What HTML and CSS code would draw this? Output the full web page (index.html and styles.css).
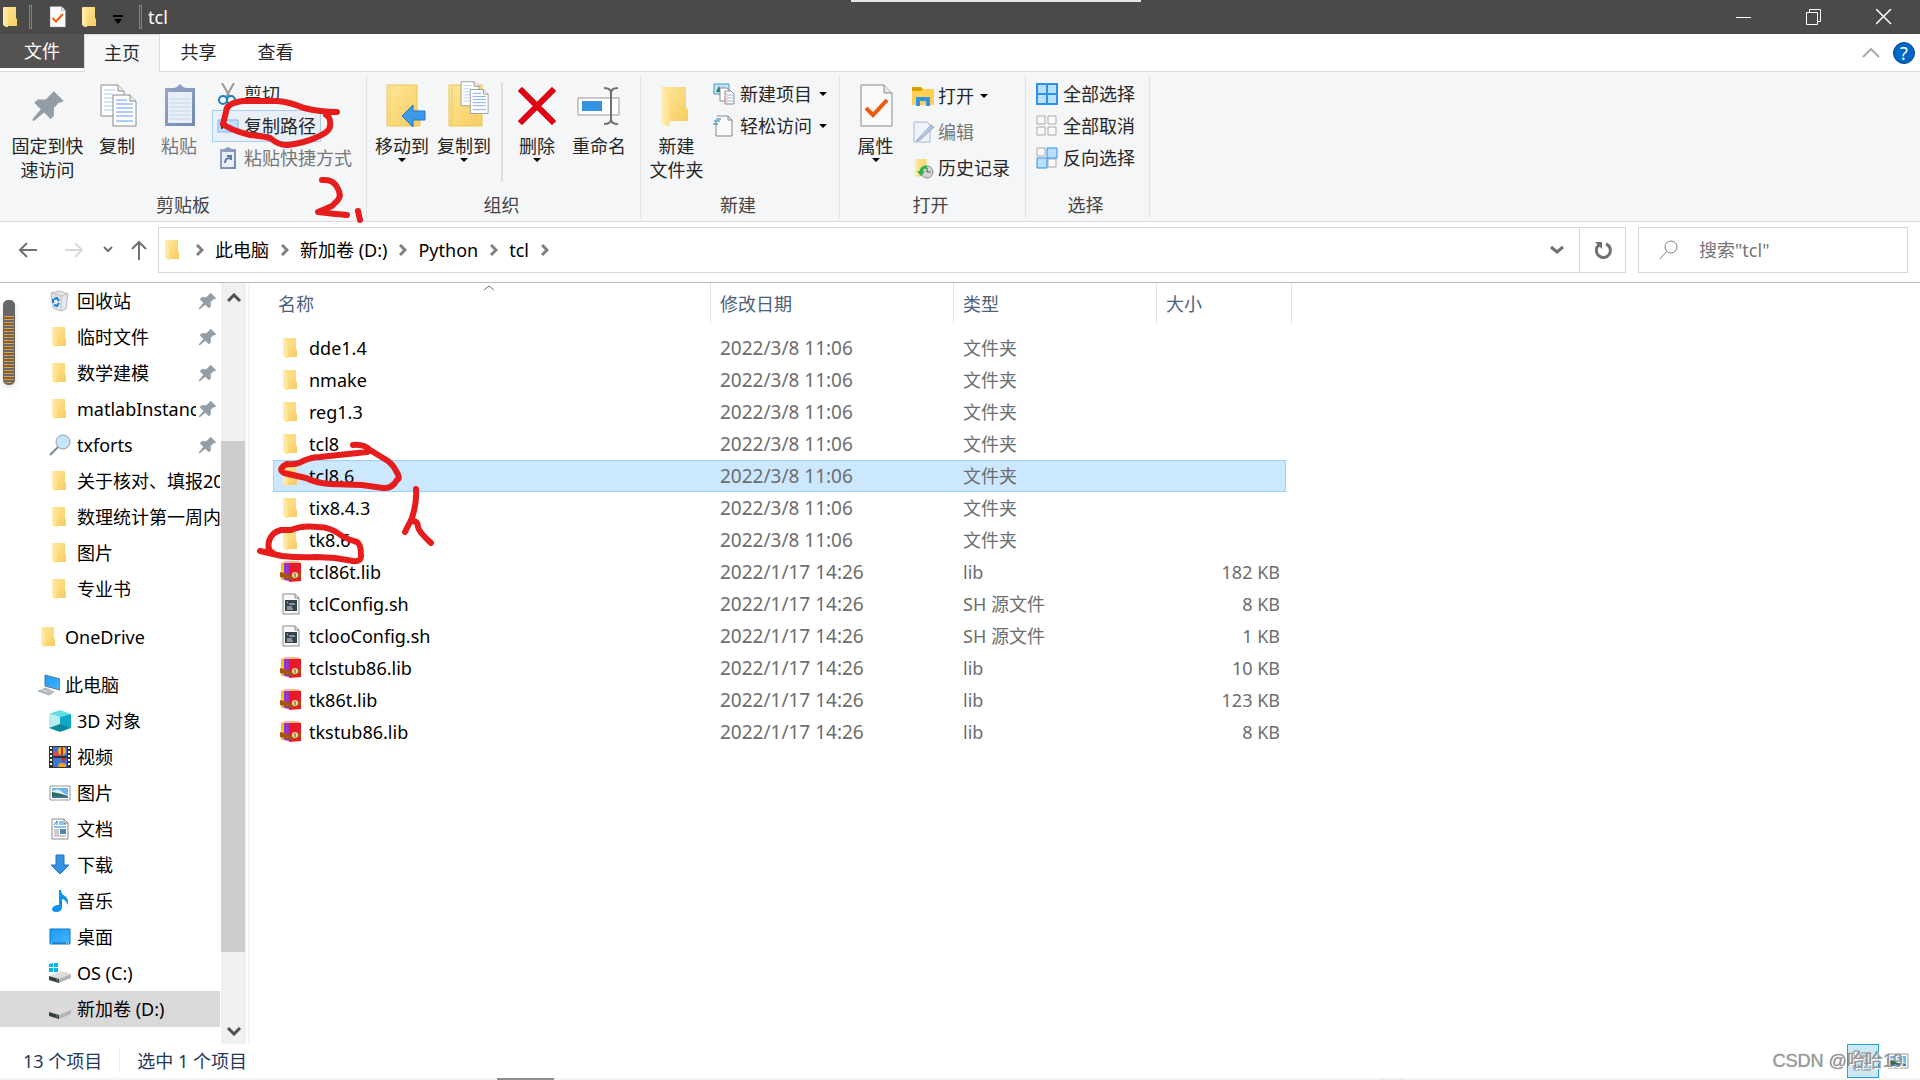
FILE: index.html
```html
<!DOCTYPE html>
<html lang="zh-CN">
<head>
<meta charset="utf-8">
<title>tcl</title>
<link rel="stylesheet" href="styles.css">
</head>
<body>
<svg class="defs" aria-hidden="true">
  <defs>
    <linearGradient id="gold" x1="0" x2="1" y1="0" y2="1"><stop offset="0" stop-color="#ffe699"/><stop offset="1" stop-color="#f6cd60"/></linearGradient>
    <linearGradient id="flap" x1="0" x2="1"><stop offset="0" stop-color="#ffeeb5"/><stop offset="1" stop-color="#ffe08a"/></linearGradient>
    <linearGradient id="sky" x1="0" x2="1" y1="0" y2="1"><stop offset="0" stop-color="#1a9bff"/><stop offset="1" stop-color="#46b4ff"/></linearGradient>
    <linearGradient id="clip" x1="0" x2="1" y1="0" y2="1"><stop offset="0" stop-color="#98a8c8"/><stop offset="1" stop-color="#7488b0"/></linearGradient>
    <symbol id="folder" viewBox="0 0 22 22"><path d="M4 1h12v11l1 1v7H4z" fill="url(#gold)"/><path d="M3 1l5 3v17l-2 0-3-2z" fill="url(#flap)"/></symbol>
    <symbol id="pin" viewBox="0 0 22 22"><path d="M14 2l6 6-2 1-1 0-3 3v5l-2 2-4-4-6 5-1-0 0-1 5-6-4-4 2-2h5l3-3z" fill="#929da5"/></symbol>
    <symbol id="pages" viewBox="0 0 38 44"><path d="M1 1h17l6 6v25H1z" fill="#fff" stroke="#8a8a8a"/><path d="M18 1v6h6" fill="#eee" stroke="#8a8a8a"/><path d="M4 6h11M4 10h9M4 14h9M4 18h9M4 22h9M4 26h9" stroke="#a9c6ff"/><path d="M13 11h17l6 6v25H13z" fill="#fff" stroke="#8a8a8a"/><path d="M30 11v6h6" fill="#eee" stroke="#8a8a8a"/><path d="M16 16h11M16 20h17M16 24h17M16 28h17M16 32h17M16 37h17" stroke="#5e98f8"/></symbol>
    <symbol id="bin" viewBox="0 0 22 22"><path d="M2 3l9-2 8 3-2 15-5 2-8-3z" fill="#e3e7ea" stroke="#b5babd"/><path d="M2 3l10 3 7-2M12 6v15" stroke="#bcc2c6" fill="none"/><path d="M5 9l3-1 2 3M10 13l-2 3-3-1M4 13V9" fill="none" stroke="#167fd5" stroke-width="2"/></symbol>
    <symbol id="lens" viewBox="0 0 22 22"><path d="M1 21l8-8" stroke="#7b858d" stroke-width="2"/><circle cx="14" cy="8" r="7" fill="#c4e6fc" stroke="#8e9da9"/></symbol>
    <symbol id="pc" viewBox="0 0 22 22"><path d="M7 1l15 4v11L7 12z" fill="url(#sky)" stroke="#59768a"/><path d="M0 17l8-3 8 4-5 3z" fill="#d4d9dd" stroke="#a8b0b5"/><path d="M3 17l9 3M6 15l8 4" stroke="#9aa3aa"/></symbol>
    <symbol id="cube" viewBox="0 0 22 22"><path d="M0 4l11-4 11 4-11 3z" fill="#67dbe4"/><path d="M0 4l11 3v9L0 18z" fill="#b8eef0"/><path d="M22 4L11 7v9l11 2z" fill="#0ca9c9"/><path d="M0 18l11-4 11 4-11 4z" fill="#0b8a9d"/></symbol>
    <symbol id="video" viewBox="0 0 22 22"><path d="M0 0h22v22H0z" fill="#333"/><path d="M4 1h14v9H4zM4 12h14v9H4z" fill="#3f74d9"/><path d="M1 2h2M1 6h2M1 10h2M1 14h2M1 18h2M19 2h2M19 6h2M19 10h2M19 14h2M19 18h2" stroke="#fff" stroke-width="2"/><path d="M4 7l4-2 5 5H4z" fill="#d64a5b"/><circle cx="13" cy="5" r="4" fill="#f2b21c"/><path d="M13 1v8" stroke="#c43019" stroke-width="2"/><path d="M12 12h5l-2 4h-1z" fill="#cc2b25"/><path d="M9 21q0-4 4-4t4 4z" fill="#f5a61b"/></symbol>
    <symbol id="photo" viewBox="0 0 22 22"><path d="M1 4h20v14H1z" fill="#fff" stroke="#999"/><path d="M3 6h16v10H3z" fill="#6cb6ed"/><path d="M3 9q6-3 9 0t7 4v3H3z" fill="#d8edf6"/><path d="M3 10q7 1 16 4H3z" fill="#2e6a58"/><path d="M3 14h16v2H3z" fill="#3874a3"/></symbol>
    <symbol id="doc" viewBox="0 0 22 22"><path d="M3 1h12l4 4v16H3z" fill="#fff" stroke="#888"/><path d="M15 1v4h4" fill="none" stroke="#888"/><path d="M5 7l3-4v4M10 4h4M10 6h7M5 9h12" fill="none" stroke="#1589d6"/><path d="M5 12h5M5 14h5M5 16h5M5 18h12" stroke="#999"/><path d="M11 11h6v5h-6z" fill="#4d86ac"/></symbol>
    <symbol id="down" viewBox="0 0 22 22"><path d="M7 1h8v10h5l-9 9-9-9h5z" fill="#3492e4" stroke="#1f72bd"/></symbol>
    <symbol id="note" viewBox="0 0 22 22"><path d="M10 0h2q0 4 4 6 5 4 2 9 0-5-5-6v8q0 5-6 5-4 0-4-3 1-4 7-4z" fill="#0a92ee"/></symbol>
    <symbol id="desk" viewBox="0 0 22 22"><path d="M1 3h20v15H1z" fill="url(#sky)" stroke="#0877bd"/><path d="M2 17h18" stroke="#0877bd"/><path d="M2 17h1M17 17h1M19 17h1" stroke="#fff"/></symbol>
    <symbol id="disk" viewBox="0 0 22 22"><path d="M0 14l12-5 10 3-12 5z" fill="#dcdcde"/><path d="M10 17l12-5v4l-12 5z" fill="#b4b4b7"/><path d="M0 14l10 3v4L0 18z" fill="#3a3d3a"/><path d="M7 17l2 1v1l-2-1z" fill="#30d040"/></symbol>
    <symbol id="osdisk" viewBox="0 0 22 22"><use href="#disk"/><path d="M0 2l4-1v4H0zM5 1h4v4H5zM0 6h4v4H0zM5 6h4v4H5z" fill="#00b7f1"/></symbol>
    <symbol id="rar" viewBox="0 0 22 22"><path d="M1 2l3-1v18H1z" fill="#f5c214"/><path d="M4 1h5v19l-5-1z" fill="#9435cc"/><path d="M9 2h12v18l-12 1z" fill="#e51b2b"/><path d="M2 2l3-2h13l3 2z" fill="#f6b98a"/><path d="M0 11l11 3 10-2v4l-10 3-11-3z" fill="#a8560f"/><circle cx="15" cy="14" r="3" fill="#ead9a6"/><path d="M15 12v4" stroke="#685015"/></symbol>
    <symbol id="sh" viewBox="0 0 22 22"><path d="M3 1h12l4 4v16H3z" fill="#fafafa" stroke="#888"/><path d="M15 1v4h4" fill="none" stroke="#888"/><path d="M5 7h12v11H5z" fill="#33454e"/><path d="M7 9l1 1M9 11h6M7 14h5M7 16h6" stroke="#dfe5e8"/></symbol>
    <symbol id="check" viewBox="0 0 34 44"><path d="M1 1h23l8 8v33H1z" fill="#fafafa" stroke="#8a8a8a"/><path d="M24 1v8h8" fill="#e6e6e6" stroke="#8a8a8a"/><path d="M6 24l7 7 14-15" fill="none" stroke="#f25a0c" stroke-width="4"/></symbol>
    <symbol id="caret" viewBox="0 0 8 5"><path d="M0 0h8L4 4z" fill="#000"/></symbol>
    <symbol id="chev" viewBox="0 0 8 12"><path d="M1 1l5 5-5 5" fill="none" stroke="#808080" stroke-width="3"/></symbol>
    <symbol id="vee" viewBox="0 0 14 10"><path d="M1 2l6 5 6-5" fill="none" stroke="#707070" stroke-width="3"/></symbol>
  </defs>
</svg>

<header class="titlebar">
  <svg class="i22 app"><use href="#folder"/></svg>
  <span class="bar"></span>
  <button class="quick" aria-label="属性"><svg class="i22" viewBox="0 0 34 44"><use href="#check"/></svg></button>
  <button class="quick" aria-label="新建文件夹"><svg class="i22"><use href="#folder"/></svg></button>
  <button class="quick narrow" aria-label="自定义"><svg width="10" height="10"><path d="M0 1h10" stroke="#000" stroke-width="2"/><path d="M1 4h8L5 9z"/></svg></button>
  <span class="bar"></span>
  <h1>tcl</h1>
  <div class="wins">
    <button aria-label="最小化"><svg width="16" height="16"><path d="M0 8.500h15" stroke="#fff"/></svg></button>
    <button aria-label="还原"><svg width="16" height="16"><path d="M.5 3.500h11v12H.5zM3.500 3V.5h11v12H12" fill="none" stroke="#fff"/></svg></button>
    <button aria-label="关闭"><svg width="16" height="16"><path d="M0 0l15 15M15 0L0 15" stroke="#fff" stroke-width="1.500"/></svg></button>
  </div>
  <span class="grip"></span>
</header>

<nav class="tabs">
  <button class="tab file">文件</button>
  <button class="tab active">主页</button>
  <button class="tab">共享</button>
  <button class="tab">查看</button>
  <div class="tabend">
    <button aria-label="折叠"><svg width="18" height="12"><path d="M1 10l8-8 8 8" fill="none" stroke="#aaa" stroke-width="2"/></svg></button>
    <button class="help" aria-label="帮助">?</button>
  </div>
</nav>

<section class="ribbon">
  <div class="group g1">
    <div class="tools">
      <button class="big wide"><svg viewBox="0 0 44 44"><use href="#pin" x="5" y="4" width="36" height="36"/></svg><span>固定到快<br>速访问</span></button>
      <button class="big"><svg viewBox="0 0 44 44"><use href="#pages" x="5" y="0" width="38" height="44"/></svg><span>复制</span></button>
      <button class="big off"><svg viewBox="0 0 44 44"><path d="M8 4h30v38H8z" fill="url(#clip)"/><path d="M11 8h24v31H11z" fill="#e9effa"/><path d="M12 15h22M12 19h22M12 23h22M12 27h22M12 31h22M12 35h22" stroke="#c8d3e8"/><path d="M14 8V5l6-2 3-3 3 3 6 2v3z" fill="#8c9cc0"/></svg><span>粘贴</span></button>
      <div class="stack">
        <button class="small"><svg class="i22" viewBox="0 0 22 22"><path d="M5 0l8 14M17 0L9 14" stroke="#999" stroke-width="2"/><circle cx="6" cy="17" r="4" fill="none" stroke="#1680c4" stroke-width="2"/><circle cx="14" cy="17" r="4" fill="none" stroke="#1680c4" stroke-width="2"/></svg>剪切</button>
        <button class="small hot"><svg class="i22" viewBox="0 0 22 22"><path d="M1 5h20v12H1z" fill="#bfe2ff" stroke="#7eb7e8"/><path d="M3 8l2 6 2-6 2 6" fill="none" stroke="#222"/></svg>复制路径</button>
        <button class="small off"><svg class="i22" viewBox="0 0 22 22"><path d="M3 2h16v20H3z" fill="url(#clip)"/><path d="M5 5h12v15H5z" fill="#e9effa"/><path d="M7 4V2l4-2 4 2v2z" fill="#8c9cc0"/><path d="M8 16q0-5 5-5M10 9h4v4" fill="none" stroke="#647aa5" stroke-width="2"/></svg>粘贴快捷方式</button>
      </div>
    </div>
    <div class="caption">剪贴板</div>
  </div>
  <div class="group g2">
    <div class="tools">
      <button class="big"><svg viewBox="-5 0 44 44"><path d="M2 1h30v24l3 4v13H2z" fill="url(#gold)" stroke="#eec650"/><path d="M5 2v39" stroke="#f5d372"/><path d="M17 32l11-11v6h12v9H28v7z" fill="#3c9ae8" stroke="#2379c5"/></svg><span>移动到</span><svg class="caret"><use href="#caret"/></svg></button>
      <button class="big"><svg viewBox="-5 0 44 44"><path d="M2 1h33v41H2z" fill="url(#gold)" stroke="#eec650"/><path d="M5 2v39M28 30v12" stroke="#efc960"/><use href="#pages" x="13" y="-3" width="30" height="34"/></svg><span>复制到</span><svg class="caret"><use href="#caret"/></svg></button>
      <i class="rule"></i>
      <button class="big"><svg viewBox="0 0 44 44"><path d="M5 5l34 34M39 5L5 39" stroke="#a90610" stroke-width="6"/><path d="M5 5l34 34M39 5L5 39" stroke="#e60012" stroke-width="5"/></svg><span>删除</span><svg class="caret"><use href="#caret"/></svg></button>
      <button class="big"><svg viewBox="0 0 44 44"><path d="M1 14h41v17H1z" fill="#fff" stroke="#999"/><path d="M5 17h20v10H5z" fill="#3492e4"/><path d="M27 4q7 0 7 5v26q0 5-7 5M41 4q-7 0-7 5v26q0 5 7 5" fill="none" stroke="#707070" stroke-width="2"/></svg><span>重命名</span></button>
    </div>
    <div class="caption">组织</div>
  </div>
  <div class="group g3">
    <div class="tools">
      <button class="big"><svg viewBox="0 0 44 44"><path d="M7 3h24v20l2 3v11H7z" fill="url(#gold)"/><path d="M6 3l9 7v30l-2 3-7-4z" fill="url(#flap)"/></svg><span>新建<br>文件夹</span></button>
      <div class="stack">
        <button class="small"><svg class="i22" viewBox="0 0 22 22"><path d="M1 1h15v10H1z" fill="#bfe6fa" stroke="#5795bd"/><path d="M3 9l3-6 3 6z" fill="#36735e"/><path d="M7 5h7l3 3v10H7z" fill="#fff" stroke="#888"/><path d="M12 8h6l3 3v10h-9z" fill="#fff" stroke="#888"/><path d="M15 12h5M15 15h5M15 18h5" stroke="#8fb5ee"/><path d="M14 10v10" stroke="#f2a2a2"/></svg>新建项目<svg class="caret"><use href="#caret"/></svg></button>
        <button class="small"><svg class="i22" viewBox="0 0 22 22"><path d="M4 1h11l4 4v16H3V6" fill="#fafafa" stroke="#888"/><path d="M15 1v4h4" fill="none" stroke="#888"/><path d="M3 4h5M1 6h6M0 9h5" stroke="#1777b7" stroke-width="1"/></svg>轻松访问<svg class="caret"><use href="#caret"/></svg></button>
      </div>
    </div>
    <div class="caption">新建</div>
  </div>
  <div class="group g4">
    <div class="tools">
      <button class="big"><svg viewBox="0 0 44 44"><use href="#check" x="6" y="0" width="34" height="44"/></svg><span>属性</span><svg class="caret"><use href="#caret"/></svg></button>
      <div class="stack loose">
        <button class="small"><svg class="i22" viewBox="0 0 22 22"><path d="M0 4V2h9l2 2h11v16H0z" fill="#ffd053"/><path d="M0 2h9l2 2-2 2H0z" fill="#dba000"/><path d="M4 21v-9h14v9h-4v-5H8v5z" fill="#3492e4"/></svg>打开<svg class="caret"><use href="#caret"/></svg></button>
        <button class="small off"><svg class="i22" viewBox="0 0 22 22"><path d="M2 1h13l3 3v17H2z" fill="#eef3fb" stroke="#a9b8d5"/><path d="M5 19L19 4l3 2L8 19l-4 1z" fill="#b9c7e1" stroke="#93a5ca"/></svg>编辑</button>
        <button class="small"><svg class="i22" viewBox="0 0 22 22"><use href="#folder" width="20" height="22"/><circle cx="15" cy="15" r="6" fill="#d4d4d4" stroke="#888"/><path d="M15 11v4h4" fill="none" stroke="#555"/><path d="M15 10q-6 0-6 5" fill="none" stroke="#2bb24c" stroke-width="3"/><path d="M5 14h8l-4 5z" fill="#2bb24c"/></svg>历史记录</button>
      </div>
    </div>
    <div class="caption">打开</div>
  </div>
  <div class="group g5">
    <div class="tools">
      <div class="stack">
        <button class="small"><svg class="i22" viewBox="0 0 22 22"><path d="M1 1h20v20H1z" fill="#b9e0ff" stroke="#2c93e8" stroke-width="2"/><path d="M11 0v22M0 11h22" stroke="#2c93e8" stroke-width="2"/></svg>全部选择</button>
        <button class="small"><svg class="i22" viewBox="0 0 22 22"><path d="M1 1h8v8H1zM12 1h8v8h-8zM1 12h8v8H1zM12 12h8v8h-8z" fill="#fafafa" stroke="#aaa"/></svg>全部取消</button>
        <button class="small"><svg class="i22" viewBox="0 0 22 22"><path d="M1 1h8v8H1zM12 12h8v8h-8z" fill="#fafafa" stroke="#aaa"/><path d="M11 1h10v10H11zM1 11h10v10H1z" fill="#b9e0ff" stroke="#2c93e8"/></svg>反向选择</button>
      </div>
    </div>
    <div class="caption">选择</div>
  </div>
</section>

<section class="navbar">
  <div class="arrows">
    <button aria-label="后退"><svg width="20" height="18"><path d="M19 9H2M9 2L2 9l7 7" fill="none" stroke="#707070" stroke-width="2"/></svg></button>
    <button aria-label="前进"><svg width="20" height="18"><path d="M1 9h17M11 2l7 7-7 7" fill="none" stroke="#d8d8d8" stroke-width="2"/></svg></button>
    <button class="slim" aria-label="最近"><svg width="10" height="8"><path d="M1 1l4 4 4-4" fill="none" stroke="#707070" stroke-width="2"/></svg></button>
    <button class="slim" aria-label="上移"><svg width="16" height="20"><path d="M8 20V2M1 9l7-7 7 7" fill="none" stroke="#707070" stroke-width="2"/></svg></button>
  </div>
  <div class="address">
    <svg class="i22"><use href="#folder"/></svg>
    <svg class="chev"><use href="#chev"/></svg><a href="#">此电脑</a>
    <svg class="chev"><use href="#chev"/></svg><a href="#">新加卷 (D:)</a>
    <svg class="chev"><use href="#chev"/></svg><a href="#">Python</a>
    <svg class="chev"><use href="#chev"/></svg><a href="#">tcl</a>
    <svg class="chev"><use href="#chev"/></svg>
    <button class="drop" aria-label="历史"><svg width="14" height="10"><use href="#vee"/></svg></button>
    <button class="reload" aria-label="刷新"><svg width="18" height="18"><path d="M12 3a7 7 0 1 1-7 1" fill="none" stroke="#707070" stroke-width="3"/><path d="M1 1h7v7z" fill="#707070"/></svg></button>
  </div>
  <label class="search">
    <svg width="20" height="20"><circle cx="12" cy="7" r="6" fill="none" stroke="#808080"/><path d="M8 11l-7 8" stroke="#808080" stroke-width="1"/></svg>
    <input type="text" aria-label="搜索" placeholder="搜索&quot;tcl&quot;">
  </label>
</section>

<main class="body">
  <aside class="side">
    <div class="tree">
      <a href="#"><svg class="i22"><use href="#bin"/></svg><span>回收站</span><svg class="pinned"><use href="#pin"/></svg></a>
      <a href="#"><svg class="i22"><use href="#folder"/></svg><span>临时文件</span><svg class="pinned"><use href="#pin"/></svg></a>
      <a href="#"><svg class="i22"><use href="#folder"/></svg><span>数学建模</span><svg class="pinned"><use href="#pin"/></svg></a>
      <a href="#"><svg class="i22"><use href="#folder"/></svg><span>matlabInstanc</span><svg class="pinned"><use href="#pin"/></svg></a>
      <a href="#"><svg class="i22"><use href="#lens"/></svg><span>txforts</span><svg class="pinned"><use href="#pin"/></svg></a>
      <a href="#"><svg class="i22"><use href="#folder"/></svg><span>关于核对、填报20</span></a>
      <a href="#"><svg class="i22"><use href="#folder"/></svg><span>数理统计第一周内</span></a>
      <a href="#"><svg class="i22"><use href="#folder"/></svg><span>图片</span></a>
      <a href="#"><svg class="i22"><use href="#folder"/></svg><span>专业书</span></a>
      <a href="#" class="root"><svg class="i22"><use href="#folder"/></svg><span>OneDrive</span></a>
      <a href="#" class="root"><svg class="i22"><use href="#pc"/></svg><span>此电脑</span></a>
      <a href="#"><svg class="i22"><use href="#cube"/></svg><span>3D 对象</span></a>
      <a href="#"><svg class="i22"><use href="#video"/></svg><span>视频</span></a>
      <a href="#"><svg class="i22"><use href="#photo"/></svg><span>图片</span></a>
      <a href="#"><svg class="i22"><use href="#doc"/></svg><span>文档</span></a>
      <a href="#"><svg class="i22"><use href="#down"/></svg><span>下载</span></a>
      <a href="#"><svg class="i22"><use href="#note"/></svg><span>音乐</span></a>
      <a href="#"><svg class="i22"><use href="#desk"/></svg><span>桌面</span></a>
      <a href="#"><svg class="i22"><use href="#osdisk"/></svg><span>OS (C:)</span></a>
      <a href="#" class="current"><svg class="i22"><use href="#disk"/></svg><span>新加卷 (D:)</span></a>
    </div>
    <div class="scroll">
      <button aria-label="向上"><svg width="14" height="10"><path d="M1 8l6-6 6 6" fill="none" stroke="#505050" stroke-width="3"/></svg></button>
      <div class="track"><div class="thumb"></div></div>
      <button aria-label="向下"><svg width="14" height="10"><path d="M1 2l6 6 6-6" fill="none" stroke="#505050" stroke-width="3"/></svg></button>
    </div>
  </aside>
  <section class="files">
    <table>
      <colgroup><col class="c1"><col class="c2"><col class="c3"><col class="c4"></colgroup>
      <thead><tr><th class="sorted">名称<svg width="12" height="7"><path d="M1 6l5-4 5 4" fill="none" stroke="#707070"/></svg></th><th>修改日期</th><th>类型</th><th>大小</th></tr></thead>
      <tbody>
        <tr><td><div><svg class="i22"><use href="#folder"/></svg>dde1.4</div></td><td>2022/3/8 11:06</td><td>文件夹</td><td></td></tr>
        <tr><td><div><svg class="i22"><use href="#folder"/></svg>nmake</div></td><td>2022/3/8 11:06</td><td>文件夹</td><td></td></tr>
        <tr><td><div><svg class="i22"><use href="#folder"/></svg>reg1.3</div></td><td>2022/3/8 11:06</td><td>文件夹</td><td></td></tr>
        <tr><td><div><svg class="i22"><use href="#folder"/></svg>tcl8</div></td><td>2022/3/8 11:06</td><td>文件夹</td><td></td></tr>
        <tr class="selected"><td><div><svg class="i22"><use href="#folder"/></svg>tcl8.6</div></td><td>2022/3/8 11:06</td><td>文件夹</td><td></td></tr>
        <tr><td><div><svg class="i22"><use href="#folder"/></svg>tix8.4.3</div></td><td>2022/3/8 11:06</td><td>文件夹</td><td></td></tr>
        <tr><td><div><svg class="i22"><use href="#folder"/></svg>tk8.6</div></td><td>2022/3/8 11:06</td><td>文件夹</td><td></td></tr>
        <tr><td><div><svg class="i22"><use href="#rar"/></svg>tcl86t.lib</div></td><td>2022/1/17 14:26</td><td>lib</td><td>182 KB</td></tr>
        <tr><td><div><svg class="i22"><use href="#sh"/></svg>tclConfig.sh</div></td><td>2022/1/17 14:26</td><td>SH 源文件</td><td>8 KB</td></tr>
        <tr><td><div><svg class="i22"><use href="#sh"/></svg>tclooConfig.sh</div></td><td>2022/1/17 14:26</td><td>SH 源文件</td><td>1 KB</td></tr>
        <tr><td><div><svg class="i22"><use href="#rar"/></svg>tclstub86.lib</div></td><td>2022/1/17 14:26</td><td>lib</td><td>10 KB</td></tr>
        <tr><td><div><svg class="i22"><use href="#rar"/></svg>tk86t.lib</div></td><td>2022/1/17 14:26</td><td>lib</td><td>123 KB</td></tr>
        <tr><td><div><svg class="i22"><use href="#rar"/></svg>tkstub86.lib</div></td><td>2022/1/17 14:26</td><td>lib</td><td>8 KB</td></tr>
      </tbody>
    </table>
  </section>
</main>

<footer class="status">
  <span class="count">13 个项目</span>
  <span class="picked">选中 1 个项目</span>
  <div class="views">
    <button class="on" aria-label="详细信息"><svg class="i22" viewBox="0 0 22 22"><path d="M2 1h5v5H2zM2 8h5v5H2zM2 15h5v5H2z" fill="#fff" stroke="#888"/><path d="M9 3h10M9 6h10M9 10h10M9 13h10M9 17h10M9 20h10" stroke="#888"/></svg></button>
    <button aria-label="大图标"><svg class="i22"><use href="#photo"/></svg></button>
  </div>
  <span class="mark">CSDN @哈哈19</span>
</footer>
<div class="meter"></div>
<div class="shade left"></div>
<div class="shade right"></div>

<svg class="ink" width="480" height="600" aria-hidden="true">
  <path d="M337 112Q320 112 304 108Q290 102 277 101L243 101Q226 103 226 112L223 124Q230 130 250 135Q262 136 270 138Q280 146 288 145Q304 143 315 138Q330 132 330 126Q331 117 326 115"/>
  <path d="M322 180Q333 179 337 187Q342 195 338 200L332 206L318 212Q334 214 347 215M358 211L360 220"/>
  <path d="M353 445Q364 444 370 450L388 461Q394 466 396 471Q401 478 397 480Q392 489 383 488L362 485L330 484Q316 483 306 478L284 473Q277 469 287 464Q297 465 303 461Q312 457 320 457L367 452"/>
  <path d="M416 489Q417 502 412 518L405 532M412 521Q418 521 418 527Q419 532 431 543"/>
  <path d="M260 551L282 556Q300 558 317 557L335 558L353 561Q361 562 361 556Q361 544 357 542Q349 540 342 536Q331 527 318 527Q302 525 291 530L281 530Q272 532 269 541Q267 551 273 553"/>
</svg>
</body>
</html>
```
FILE: styles.css
```css
* { box-sizing: border-box; }
body {
  margin: 0;
  min-height: 100vh;
  display: flex;
  flex-direction: column;
  position: relative;
  overflow: hidden;
  background: #fff;
  color: #000;
  font: 18px/24px "Noto Sans", "Noto Sans CJK SC", sans-serif;
}
button { margin: 0; padding: 0; border: 0; background: none; font: inherit; color: inherit; }
a { color: inherit; text-decoration: none; }
svg { flex: none; display: block; }
.defs { position: absolute; width: 0; height: 0; }
.i22 { width: 22px; height: 22px; }

.titlebar { position: relative; height: 34px; display: flex; align-items: center; background: #4c4a48; color: #fff; }
.app { margin-right: 7px; }
.bar { width: 3px; height: 24px; border: 1px solid #858483; }
.quick { width: 22px; margin-left: 15px; }
.quick + .quick { margin-left: 10px; }
.quick + .quick.narrow { width: 12px; margin: 6px 14px 0 12px; }
.titlebar h1 { margin: 0 0 0 6px; font-size: 18px; font-weight: 400; }
.wins { margin-left: auto; display: flex; padding-right: 1px; }
.wins button { width: 70px; height: 34px; display: grid; place-items: center; }
.grip { position: absolute; top: 0; left: 851px; width: 290px; height: 2px; background: #e6e6e6; }

.tabs { height: 38px; display: flex; border-bottom: 1px solid #d9dbdc; }
.tab { height: 36px; padding: 0 20px; min-width: 77px; color: #262626; }
.tab.file { width: 84px; height: 34px; background: #555351; color: #fff; }
.tab.active { width: 76px; min-width: 0; height: 38px; padding: 0 0 2px; background: #f4f6f7; border: 1px solid #d9dbdc; border-bottom: 0; }
.tabend { margin-left: auto; display: flex; align-items: center; gap: 13px; padding-right: 5px; }
.help { width: 22px; height: 22px; line-height: 20px; border-radius: 50%; background: #0067c8; border: 1px solid #0a4480; color: #fff; }

.ribbon { height: 150px; display: flex; background: #f4f6f8; border-bottom: 1px solid #d9dbdc; color: #262626; }
.group { height: 143px; margin-top: 3px; border-right: 1px solid #e0e2e4; display: flex; flex-direction: column; }
.g1 { width: 367px; }
.g2 { width: 274px; }
.g3 { width: 199px; }
.g4 { width: 186px; }
.g5 { width: 124px; }
.tools { height: 118px; display: flex; align-items: flex-start; padding-top: 3px; }
.g1 .tools { padding-left: 9px; }
.g2 .tools { padding-left: 4px; }
.g5 .tools { padding-left: 10px; }
.caption { text-align: center; padding-right: 4px; color: #444; }
.g1 .caption { padding-right: 0; }
.big { width: 62px; padding-top: 6px; display: flex; flex-direction: column; align-items: center; white-space: nowrap; }
.big > svg:first-child { width: 44px; height: 44px; margin-bottom: 6px; overflow: visible; }
.big.wide { width: 77px; }
.g3 .big, .g4 .big { width: 71px; }
.caret { width: 8px; height: 5px; }
.off { color: #777; }
.stack { display: flex; flex-direction: column; align-items: flex-start; }
.small { height: 32px; padding: 0 4px; display: flex; align-items: center; gap: 5px; white-space: nowrap; }
.small .caret { margin-left: 2px; }
.g1 .stack { padding-left: 2px; }
.g1 .small { border: 1px solid transparent; }
.g1 .small.hot { background: #e8eff7; border-color: #a5cdf5; }
.g3 .small, .g4 .small { padding: 0 1px; }
.g4 .small { gap: 4px; }
.loose .small { height: 36px; }
.g5 .small { padding: 0; }
.rule { width: 2px; height: 100px; margin: 4px 3px 0 6px; background: #dcdfe2; }

.navbar { height: 61px; display: flex; padding: 5px 12px 9px 0; border-bottom: 1px solid #bcbcbc; }
.arrows { width: 158px; display: flex; align-items: center; padding-left: 18px; gap: 26px; }
.arrows .slim { margin-left: -7px; }
.arrows .slim + .slim { margin-left: -8px; }
.address { flex: 1; display: flex; align-items: center; border: 1px solid #d9d9d9; padding-left: 3px; }
.address a { white-space: nowrap; }
.chev { width: 8px; height: 12px; margin: 0 11px 0 12px; }
.drop { width: 44px; height: 44px; margin-left: auto; display: grid; place-items: center; }
.reload { width: 46px; height: 44px; border-left: 1px solid #d9d9d9; display: grid; place-items: center; }
.search { width: 270px; margin-left: 12px; display: flex; align-items: center; gap: 20px; border: 1px solid #d9d9d9; padding-left: 20px; }
.search input { width: 180px; border: 0; padding: 0; outline: 0; background: none; font: inherit; }
.search input::placeholder { color: #757575; opacity: 1; }

.body { flex: 1; display: flex; }
.side { width: 250px; display: flex; border-right: 2px solid #f5f5f5; }
.tree { width: 221px; padding-bottom: 17px; }
.tree a { height: 36px; display: flex; align-items: center; gap: 6px; padding: 0 1px 0 49px; white-space: nowrap; }
.tree span { flex: 1; min-width: 0; overflow: hidden; }
.tree .root { margin: 12px 0; padding-left: 38px; gap: 5px; }
.tree .root + .root { margin-bottom: 0; }
.pinned { width: 20px; height: 20px; margin: 0 2px 0 -4px; }
.tree .current { background: #d9d9d9; margin-right: 1px; }
.scroll { width: 25px; display: flex; flex-direction: column; background: #f0f0f0; }
.scroll button { height: 30px; display: grid; place-items: center; }
.scroll button:last-child { height: 26px; }
.track { flex: 1; }
.thumb { width: 24px; height: 511px; margin-top: 128px; background: #cdcdcd; }

.files { flex: 1; padding-left: 23px; }
table { width: 1013px; table-layout: fixed; border-collapse: collapse; }
.c1 { width: 438px; }
.c2 { width: 243px; }
.c3 { width: 203px; }
.c4 { width: 129px; }
th { position: relative; height: 49px; padding: 0 0 8px 9px; text-align: left; font-weight: 400; color: #4c607a; }
th:first-child { padding-left: 5px; }
th::after { content: ""; position: absolute; right: 0; top: 0; height: 41px; border-right: 1px solid #e5e5e5; }
th:last-child::after { right: -6px; }
.sorted svg { position: absolute; left: 210px; top: 1px; }
td { height: 32px; padding: 0 0 0 9px; color: #6d6d6d; white-space: nowrap; }
td:first-child { padding-left: 7px; color: #000; }
td:nth-child(2) { font-size: 19px; }
td:last-child { text-align: right; padding-right: 6px; }
td div { display: flex; align-items: center; gap: 7px; }
.selected { background: #cce8ff; outline: 1px solid #99d1ff; outline-offset: -1px; }

.status { position: relative; height: 36px; display: flex; align-items: center; padding-left: 23px; color: #1e395b; border-bottom: 2px solid #f5f5f5; }
.picked { margin-left: 17px; padding-left: 17px; border-left: 1px solid #eee; }
.views { margin-left: auto; display: flex; gap: 8px; padding-right: 11px; }
.views button { height: 34px; display: grid; place-items: center; }
.views .on { width: 32px; background: #cce8f6; border: 1px solid #26a0da; }
.mark { position: absolute; right: 17px; top: 5px; color: #999; text-shadow: 1px 1px 0 #fff, 0 0 1px #666; font-family: "Liberation Sans", "Noto Sans CJK SC", sans-serif; }

.meter { position: absolute; left: 3px; top: 300px; width: 12px; height: 85px; border: 1px solid #666; border-width: 14px 1px 2px; border-radius: 5px; background: repeating-linear-gradient(#666 0 2px, #f79c1e 2px 3px); box-shadow: 0 3px 6px #ddd; }
.shade { position: absolute; bottom: 0; height: 2px; }
.shade.left { left: 497px; width: 57px; background: #8d8d8d; }
.shade.right { left: 1380px; width: 24px; background: #eee; }
.ink { position: absolute; left: 0; top: 0; fill: none; stroke: #e71d1d; stroke-width: 6; stroke-linecap: round; stroke-linejoin: round; pointer-events: none; }
```
